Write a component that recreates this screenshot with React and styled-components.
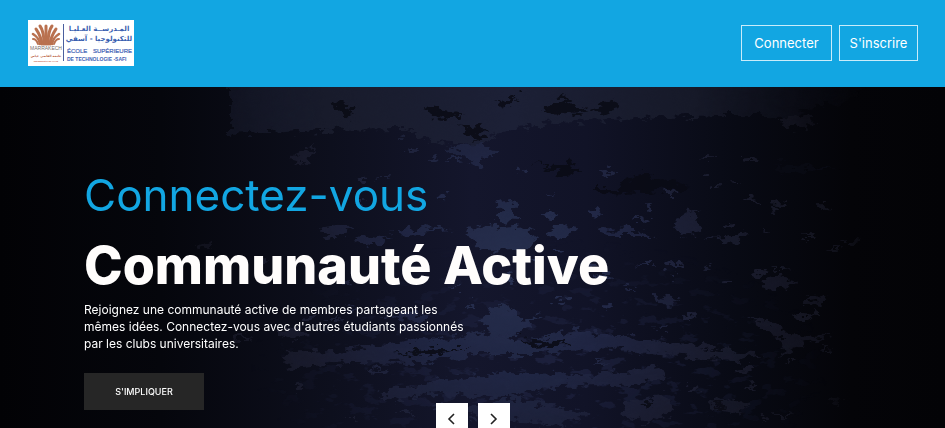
import React from "react";
import styled, { createGlobalStyle } from "styled-components";

const GlobalStyle = createGlobalStyle`
  *, *::before, *::after { box-sizing: border-box; }
  body {
    margin: 0;
    background: #020206;
    font-family: Inter, "Open Sans", sans-serif;
    color: #fff;
  }
`;

const Page = styled.div`
  display: flex;
  flex-direction: column;
  min-height: 100vh;
`;

const Header = styled.header`
  display: flex;
  align-items: flex-start;
  justify-content: space-between;
  padding: 20px 27px 21px 28px;
  background: #12a6e2;
`;

const HomeLink = styled.a`
  display: block;
  background: #fff;
  line-height: 0;
`;

const Account = styled.nav`
  display: flex;
  gap: 7px;
  padding-top: 5px;
`;

const AccountButton = styled.button`
  width: ${({ $wide }) => ($wide ? 91 : 79)}px;
  height: 36px;
  padding: 0;
  border: 1px solid #c9ecfa;
  background: transparent;
  color: #fff;
  font: 400 13px/20px Inter, sans-serif;
  cursor: pointer;
`;

const Hero = styled.main`
  position: relative;
  flex: 1;
  overflow: hidden;
  padding: 78px 84px 18px;
  isolation: isolate;
`;

const Backdrop = styled.svg`
  position: absolute;
  inset: 0;
  z-index: -1;
  width: 100%;
  height: 100%;
`;

const Kicker = styled.p`
  margin: 0;
  color: #12a6e2;
  font-size: 44px;
  font-weight: 400;
  line-height: 60px;
`;

const Title = styled.h1`
  margin: 0;
  padding-top: 6px;
  font-size: 52px;
  font-weight: 800;
  line-height: 70px;
  color: #fffdfc;
`;

const Lead = styled.p`
  max-width: 385px;
  margin: 0 0 21px;
  font-size: 12px;
  line-height: 17px;
`;

const JoinButton = styled.button`
  width: 120px;
  height: 37px;
  border: 0;
  background: #262626;
  color: #fff;
  font: 500 9px/16px Inter, sans-serif;
  text-transform: uppercase;
  cursor: pointer;
`;

const SlideControls = styled.div`
  position: absolute;
  bottom: -7px;
  left: 0;
  right: 0;
  display: flex;
  justify-content: center;
  gap: 10px;
`;

const ArrowButton = styled.button`
  display: grid;
  place-items: center;
  width: 32px;
  height: 32px;
  padding: 0;
  border: 0;
  background: #fff;
  color: #222;
  cursor: pointer;
`;

const ledge =
  "M230 -20H880L850 14 800 24 792 33 760 28 720 28 640 31 560 36 520 40 500 47 480 58 430 56 405 42 320 43 230 48Z";

const streaks = [
  "M445 61L480 57 497 64 485 72 478 80 462 68Z",
  "M790 28L818 32 812 39 792 42 780 34Z",
  "M494 116L508 111 518 118 512 125 520 134 496 133 503 124Z",
  "M466 142L486 139 500 141 529 139 536 156 519 163 482 164 470 151Z",
  "M551 142L568 137 577 142 563 154 550 149Z",
  "M388 145L420 140 451 142 419 148Z",
  "M594 141L635 142 655 149 614 149Z",
  "M671 136L690 123 702 121 693 132 704 145 680 148Z",
  "M703 151L730 150 749 143 735 156Z",
  "M320 142L352 138 343 149 327 151Z",
  "M354 154L370 148 390 152 372 160Z",
  "M482 230L502 216 523 233 541 229 526 241 508 252 492 249Z",
  "M763 192L771 189 797 195 790 200 765 203Z",
  "M805 209L829 213 822 218 807 215Z",
  "M652 206L680 213 668 218 653 211Z",
  "M750 230L774 234 787 247 831 248 795 260 779 268 784 254 762 241Z",
  "M282 266L355 263 410 254 478 247 522 253 580 243 651 253 700 259 765 269 735 274 660 267 610 262 540 267 480 267 420 276 350 275 287 280Z",
  "M378 307L442 292 508 285 578 288 660 281 665 291 612 299 552 300 506 310 438 306 392 313Z",
  "M456 326L511 311 550 318 589 329 558 338 501 333Z",
  "M626 315L668 309 674 326 646 335 622 328Z",
  "M714 314L735 312 751 320 735 327 708 321Z",
  "M275 243L294 240 310 249 287 251Z",
  "M380 228L408 224 431 230 414 235Z",
  "M292 70L315 61 309 76 290 74Z",
  "M198 160L213 154 209 164Z",
];

const gouges = [
  "M425 20L464 26 450 31 428 29Z",
  "M330 15L350 17 354 28 344 31Z",
  "M495 16L520 7 516 14 501 21Z",
  "M540 23L565 9 575 20 590 23 562 28Z",
  "M588 24L610 13 620 21 602 25Z",
  "M533 76L558 79 570 72 577 85 563 91 552 82Z",
  "M595 101L616 101 642 86 690 99 648 107 602 106Z",
  "M460 39L480 37 491 46 475 53Z",
  "M771 76L838 82 782 86Z",
  "M518 251L558 253 570 258 532 260Z",
  "M645 315L654 316 648 321 640 318Z",
  "M713 318L726 316 720 324Z",
  "M395 267L435 262 470 262 430 268Z",
];

const flecks = [
  [402, 51], [411, 63], [431, 73], [454, 72], [524, 83], [608, 85], [707, 71], [750, 73],
  [704, 86], [735, 95], [750, 114], [778, 117], [552, 106], [551, 128], [594, 125],
  [383, 90], [363, 92], [446, 109], [360, 116], [638, 133], [648, 120], [765, 145],
  [811, 148], [674, 177], [707, 180], [727, 195], [760, 186], [780, 182], [675, 189],
  [690, 229], [660, 241], [803, 230], [814, 229], [827, 261], [590, 181], [604, 190],
  [630, 202], [610, 219], [561, 215], [455, 200], [470, 219], [350, 221], [335, 232],
  [240, 251], [309, 232], [264, 175], [345, 194], [745, 284], [790, 275], [752, 299],
  [837, 312], [781, 327], [765, 332], [693, 301], [598, 273], [380, 283], [300, 299],
  [351, 331], [405, 326], [440, 320], [535, 173], [556, 165], [510, 191], [646, 178],
  [772, 125], [823, 120], [834, 161], [853, 155], [730, 138], [715, 100], [672, 105],
];

function HeroBackdrop() {
  return (
    <Backdrop viewBox="0 0 945 341" preserveAspectRatio="xMidYMid slice" aria-hidden="true">
      <defs>
        <linearGradient id="wall">
          <stop offset="0" stopColor="#020205" />
          <stop offset="0.17" stopColor="#05060c" />
          <stop offset="0.35" stopColor="#0d0f1d" />
          <stop offset="0.5" stopColor="#14162c" />
          <stop offset="0.62" stopColor="#111327" />
          <stop offset="0.78" stopColor="#080a14" />
          <stop offset="0.9" stopColor="#040408" />
          <stop offset="1" stopColor="#030306" />
        </linearGradient>
        <linearGradient id="ledge" gradientUnits="userSpaceOnUse" x1="140" y1="0" x2="880" y2="0">
          <stop offset="0" stopColor="#1b1f33" stopOpacity="0" />
          <stop offset="0.25" stopColor="#181b2b" />
          <stop offset="0.5" stopColor="#1c2036" />
          <stop offset="0.75" stopColor="#161928" />
          <stop offset="1" stopColor="#0a0b12" stopOpacity="0" />
        </linearGradient>
        <radialGradient id="paint" gradientUnits="userSpaceOnUse" cx="510" cy="180" r="370">
          <stop offset="0" stopColor="#293252" />
          <stop offset="0.3" stopColor="#212745" />
          <stop offset="0.6" stopColor="#1a1c2e" />
          <stop offset="0.85" stopColor="#12131e" />
          <stop offset="1" stopColor="#07070c" />
        </radialGradient>
        <radialGradient id="spread">
          <stop offset="0" stopColor="#fff" stopOpacity="0.7" />
          <stop offset="0.6" stopColor="#fff" stopOpacity="0.3" />
          <stop offset="1" stopColor="#fff" stopOpacity="0" />
        </radialGradient>
        <mask id="spreadMask">
          <ellipse cx="540" cy="280" rx="290" ry="130" fill="url(#spread)" />
        </mask>
        <filter id="rough" x="0" y="0" width="945" height="341" filterUnits="userSpaceOnUse" colorInterpolationFilters="sRGB">
          <feTurbulence type="fractalNoise" baseFrequency="0.09 0.16" numOctaves="3" seed="8" />
          <feDisplacementMap in="SourceGraphic" scale="18" xChannelSelector="R" yChannelSelector="G" />
        </filter>
        <filter id="speckle" x="0" y="0" width="945" height="341" filterUnits="userSpaceOnUse" colorInterpolationFilters="sRGB">
          <feTurbulence type="fractalNoise" baseFrequency="0.05 0.1" numOctaves="4" seed="21" />
          <feColorMatrix values="0 0 0 0 0.13  0 0 0 0 0.15  0 0 0 0 0.27  14 0 0 0 -8.2" />
        </filter>
      </defs>
      <rect width="945" height="341" fill="url(#wall)" />
      <g mask="url(#spreadMask)">
        <rect width="945" height="341" filter="url(#speckle)" />
      </g>
      <g filter="url(#rough)">
        <path d={ledge} fill="url(#ledge)" />
        {streaks.map((d) => (
          <path key={d} d={d} fill="url(#paint)" opacity="0.9" />
        ))}
        {flecks.map(([x, y], i) => (
          <ellipse
            key={`${x}-${y}`}
            cx={x}
            cy={y}
            rx={3 + (i % 4) * 2}
            ry={1 + (i % 3)}
            fill="url(#paint)"
          />
        ))}
        {gouges.map((d) => (
          <path key={d} d={d} fill="#090b14" opacity="0.85" />
        ))}
      </g>
    </Backdrop>
  );
}

function SchoolLogo() {
  return (
    <svg width="106" height="46" viewBox="0 0 106 46" role="img" aria-label="École Supérieure de Technologie - Safi">
      <g fill="none" stroke="#b9714f" strokeLinecap="round">
        <path d="M18 24V6" strokeWidth="3" />
        <path d="M16 24C16 15 15 10 12 6M20 24C20 15 21 10 24 6" strokeWidth="3" />
        <path d="M14 24C13 16 10 12 8 9M22 24C23 16 26 12 28 9" strokeWidth="3" />
        <path d="M12 24C11 18 8 16 5 14M24 24C25 18 28 16 31 14" strokeWidth="2.6" />
        <path d="M10 24C9 21 7 19 5 19M26 24C27 21 29 19 31 19" strokeWidth="2" />
      </g>
      <g fontFamily="'Liberation Sans', sans-serif" textAnchor="middle">
        <text x="18" y="30" fontSize="5" fill="#77706d">MARRAKECH</text>
        <text x="18" y="37" fontSize="3" fontWeight="700" fill="#b65a3a" fontFamily="'DejaVu Sans', sans-serif">جامعة القاضي عياض</text>
        <text x="18" y="42" fontSize="2" fontWeight="700" fill="#c04a32">UNIVERSITÉ CADI AYYAD</text>
      </g>
      <path d="M35.5 4V41" stroke="#4b5f9e" />
      <g fill="#3a5fb0" fontFamily="'DejaVu Sans', sans-serif" fontSize="7" fontWeight="700" textAnchor="middle">
        <text x="71" y="11" direction="rtl">المـدرســة العـليـا</text>
        <text x="71" y="21" direction="rtl">للتكنولوجيا - آسفي</text>
      </g>
      <g fill="#3f62b5" fontFamily="'Liberation Sans', sans-serif">
        <text x="39" y="33" fontSize="6" stroke="#3f62b5" strokeWidth="0.2">ÉCOLE</text>
        <text x="104" y="33" fontSize="6" textAnchor="end" stroke="#3f62b5" strokeWidth="0.2">SUPÉRIEURE</text>
        <text x="39" y="41" fontSize="5" fontWeight="700">DE TECHNOLOGIE -SAFI</text>
      </g>
    </svg>
  );
}

function Chevron({ d }) {
  return (
    <svg width="9" height="14" viewBox="0 0 9 14" fill="none" stroke="currentColor" strokeWidth="1.6" aria-hidden="true">
      <path d={d} />
    </svg>
  );
}

export default function App() {
  return (
    <Page>
      <GlobalStyle />
      <Header>
        <HomeLink href="#accueil">
          <SchoolLogo />
        </HomeLink>
        <Account aria-label="Compte">
          <AccountButton type="button" $wide>Connecter</AccountButton>
          <AccountButton type="button">S'inscrire</AccountButton>
        </Account>
      </Header>
      <Hero>
        <HeroBackdrop />
        <Kicker>Connectez-vous</Kicker>
        <Title>Communauté Active</Title>
        <Lead>
          Rejoignez une communauté active de membres partageant les mêmes idées. Connectez-vous
          avec d'autres étudiants passionnés par les clubs universitaires.
        </Lead>
        <JoinButton type="button">S'impliquer</JoinButton>
        <SlideControls>
          <ArrowButton type="button" aria-label="Précédent">
            <Chevron d="M7 2L2 7L7 12" />
          </ArrowButton>
          <ArrowButton type="button" aria-label="Suivant">
            <Chevron d="M2 2L7 7L2 12" />
          </ArrowButton>
        </SlideControls>
      </Hero>
    </Page>
  );
}
